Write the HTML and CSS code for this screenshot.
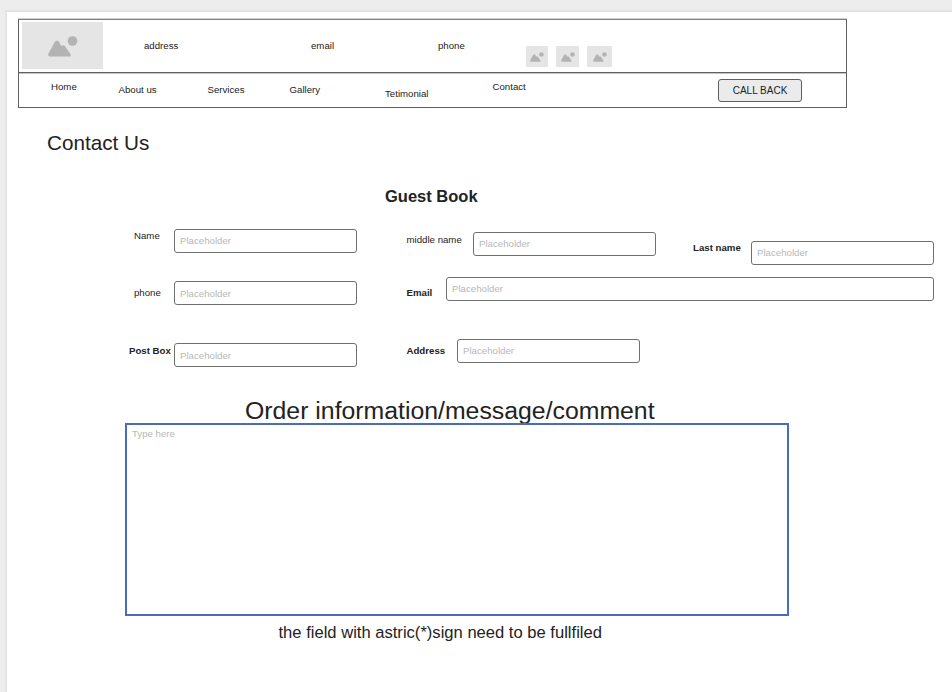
FILE: index.html
```html
<!DOCTYPE html>
<html lang="en">
<head>
<meta charset="utf-8">
<title>Contact Us</title>
<link rel="stylesheet" href="styles.css">
</head>
<body>
<svg class="defs" width="0" height="0" aria-hidden="true">
  <symbol id="picture" viewBox="0 0 30 21">
    <path d="M2 20.5C.3 20.5-.4 19 .5 17.400L6.600 6.300C7.800 4.300 10.200 4.300 11.300 6.300L13.200 10C14.600 8.700 16.300 8.900 17.200 10.400L22.400 18C23.200 19.300 22.600 20.500 21.300 20.500Z"/>
    <circle cx="24.500" cy="5" r="4.800"/>
  </symbol>
</svg>
<main class="page">
  <header class="header">
    <div class="topbar">
      <div class="logo"><svg><use href="#picture"/></svg></div>
      <span class="info info-address">address</span>
      <span class="info info-email">email</span>
      <span class="info info-phone">phone</span>
      <div class="socials">
        <div class="social social-1"><svg><use href="#picture"/></svg></div>
        <div class="social social-2"><svg><use href="#picture"/></svg></div>
        <div class="social social-3"><svg><use href="#picture"/></svg></div>
      </div>
    </div>
    <nav class="nav">
      <a class="nav-home">Home</a>
      <a class="nav-about">About us</a>
      <a class="nav-services">Services</a>
      <a class="nav-gallery">Gallery</a>
      <a class="nav-testimonial">Tetimonial</a>
      <a class="nav-contact">Contact</a>
      <button class="callback" type="button">CALL BACK</button>
    </nav>
  </header>
  <h1 class="title">Contact Us</h1>
  <h2 class="subtitle">Guest Book</h2>
  <form class="form">
    <div class="row row-1">
      <label class="label-name" for="name">Name</label>
      <input class="input-name" id="name" placeholder="Placeholder">
      <label class="label-middle" for="middle">middle name</label>
      <input class="input-middle" id="middle" placeholder="Placeholder">
      <label class="label-last strong" for="last">Last name</label>
      <input class="input-last" id="last" placeholder="Placeholder">
    </div>
    <div class="row row-2">
      <label class="label-phone" for="phone">phone</label>
      <input class="input-phone" id="phone" placeholder="Placeholder">
      <label class="label-email strong" for="email">Email</label>
      <input class="input-email" id="email" placeholder="Placeholder">
    </div>
    <div class="row row-3">
      <label class="label-post strong" for="post">Post Box</label>
      <input class="input-post" id="post" placeholder="Placeholder">
      <label class="label-address strong" for="address">Address</label>
      <input class="input-address" id="address" placeholder="Placeholder">
    </div>
    <h2 class="message-title">Order information/message/comment</h2>
    <textarea class="message" placeholder="Type here"></textarea>
    <p class="note">the field with astric(*)sign need to be fullfiled</p>
  </form>
</main>
</body>
</html>
```
FILE: styles.css
```css
* { box-sizing: border-box; }

body {
  margin: 0;
  padding: 10px 0 0 5px;
  height: 692px;
  overflow: hidden;
  background: #ededed;
  color: #222;
  font: 9.67px/12px "Liberation Sans", Arial, sans-serif;
}

.defs { display: block; height: 0; }

.page {
  height: 682px;
  padding: 7px 0 0 11px;
  border-top: 2px solid #e4e4e4;
  border-left: 2px solid #e4e4e4;
  background: #fff;
}

.header {
  width: 829px;
  height: 89px;
  border: 1px solid #606060;
  border-top-color: #808080;
  box-shadow: 0 -1px #d0d0d0;
}

.topbar, .nav, .row, .socials {
  display: flex;
  align-items: flex-start;
}

.topbar {
  height: 53px;
  padding-left: 3px;
  border-bottom: 1px solid #606060;
  box-shadow: 0 1px #c4c4c4;
}

.logo {
  width: 81px;
  height: 47px;
  margin-top: 2px;
  padding: 13.5px 0 0 26px;
  background: #e5e5e5;
}

svg { display: block; fill: #b3b3b3; }
.logo svg { width: 30px; height: 21px; }

.info { margin-top: 20px; }
.info-address { width: 167px; margin-left: 41px; }
.info-email { width: 127px; }
.info-phone { width: 88px; }

.socials { margin-top: 26px; }
.social {
  display: flex;
  justify-content: center;
  height: 21px;
  padding-top: 6px;
  background: #e5e5e5;
}
.social svg { width: 14px; height: 10px; }
.social-1 { width: 22px; }
.social-2 { width: 23px; margin-left: 8px; }
.social-3 { width: 25px; margin-left: 8px; }

.nav { padding-left: 32px; }
.nav a { margin-top: 11px; white-space: nowrap; }
.nav .nav-home { width: 67.5px; margin-top: 8px; }
.nav-about { width: 89px; }
.nav-services { width: 82px; }
.nav-gallery { width: 95.500px; }
.nav .nav-testimonial { width: 107.500px; margin-top: 15px; }
.nav .nav-contact { width: 225.500px; margin-top: 8px; }

.callback {
  width: 84px;
  height: 23px;
  margin-top: 6px;
  padding: 0;
  border: 1px solid #606060;
  border-radius: 3px;
  background: #ebebeb;
  color: #222;
  font: inherit;
  font-size: 10px;
}

.title {
  margin: 23px 0 0 29px;
  font-size: 20.7px;
  line-height: 24px;
  font-weight: 400;
}

.subtitle {
  margin: 31px 0 0 367px;
  font-size: 16.5px;
  line-height: 20px;
  font-weight: 700;
}

.form { margin-top: 22px; }
.row-1 { height: 48px; }
.row-2 { height: 62px; }
.row-3 { height: 59px; }
.strong { font-weight: 700; }
label { white-space: nowrap; }

input {
  width: 183px;
  height: 24px;
  padding: 0 5px 1px;
  border: 1px solid #707070;
  border-radius: 3px;
  background: #fff;
  font: inherit;
}
input::placeholder, textarea::placeholder { color: #b8b8b8; opacity: 1; }

.label-name { width: 40px; margin: 2px 0 0 116px; }
.input-name { margin-top: 1px; }
.label-middle { width: 66.500px; margin: 6px 0 0 49.500px; }
.input-middle { margin-top: 4px; }
.label-last { width: 58px; margin: 14px 0 0 37px; }
.input-last { margin-top: 13px; }

.label-phone { width: 40px; margin: 11px 0 0 116px; }
.input-phone { margin-top: 5px; padding-bottom: 0; }
.label-email { width: 39.500px; margin: 11px 0 0 49.500px; }
.input-email { width: 488px; margin-top: 1px; }

.label-post { width: 45px; margin: 7px 0 0 111px; }
.input-post { margin-top: 5px; padding-bottom: 0; }
.label-address { width: 50.500px; margin: 7px 0 0 49.500px; }
.input-address { margin-top: 1px; }

.message-title {
  margin: 0 0 0 227px;
  font-size: 24.820px;
  line-height: 28px;
  font-weight: 400;
  white-space: nowrap;
}

.message {
  position: relative;
  display: block;
  width: 664px;
  height: 193px;
  margin: -2px 0 0 107px;
  padding: 3px 5px;
  border: 2px solid #4a6bbf;
  background: #fff;
  font: inherit;
  resize: none;
}

.note {
  margin: 7px 0 0 260.500px;
  font-size: 16.580px;
  line-height: 20px;
}
```
